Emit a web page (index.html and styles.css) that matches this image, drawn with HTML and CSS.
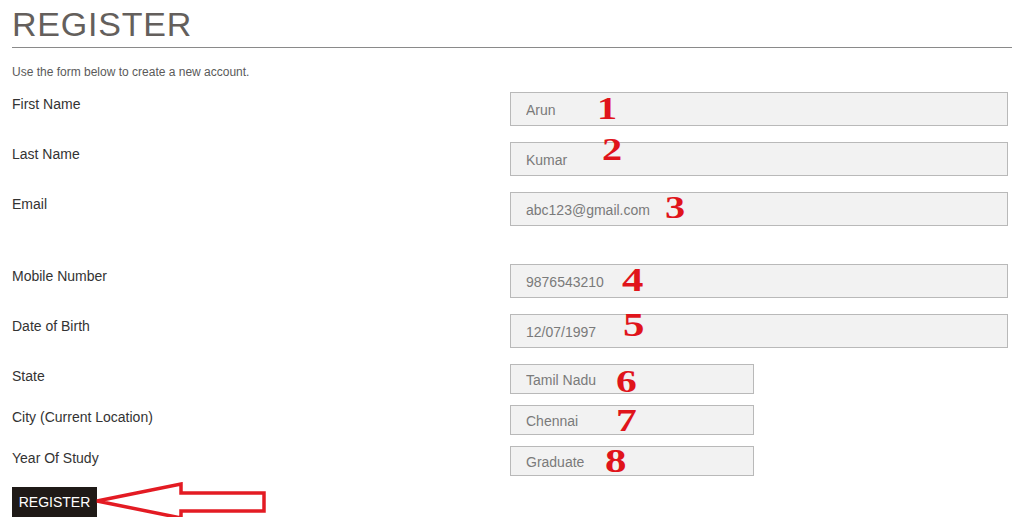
FILE: index.html
```html
<!DOCTYPE html>
<html>
<head>
<meta charset="utf-8">
<title>Register</title>
<link rel="stylesheet" href="styles.css">
</head>
<body>
<div class="page">
  <h1 class="title">REGISTER</h1>
  <p class="intro">Use the form below to create a new account.</p>
  <form class="form">
    <div class="row">
      <label class="label">First Name</label>
      <div class="field"><input class="input" type="text" value="Arun"><span class="num n1">1</span></div>
    </div>
    <div class="row">
      <label class="label">Last Name</label>
      <div class="field"><input class="input" type="text" value="Kumar"><span class="num n2">2</span></div>
    </div>
    <div class="row row-spaced">
      <label class="label">Email</label>
      <div class="field"><input class="input" type="text" value="abc123@gmail.com"><span class="num n3">3</span></div>
    </div>
    <div class="row">
      <label class="label">Mobile Number</label>
      <div class="field"><input class="input" type="text" value="9876543210"><span class="num n4">4</span></div>
    </div>
    <div class="row">
      <label class="label">Date of Birth</label>
      <div class="field"><input class="input" type="text" value="12/07/1997"><span class="num n5">5</span></div>
    </div>
    <div class="row row-small">
      <label class="label">State</label>
      <div class="field"><input class="input input-small" type="text" value="Tamil Nadu"><span class="num n6">6</span></div>
    </div>
    <div class="row row-small">
      <label class="label">City (Current Location)</label>
      <div class="field"><input class="input input-small" type="text" value="Chennai"><span class="num n7">7</span></div>
    </div>
    <div class="row row-small">
      <label class="label">Year Of Study</label>
      <div class="field"><input class="input input-small" type="text" value="Graduate"><span class="num n8">8</span></div>
    </div>
    <div class="actions">
      <button class="btn" type="button">REGISTER</button>
      <svg class="arrow" width="176" height="38" viewBox="0 0 176 38">
        <polygon points="3,19 87,2 87,11 170,11 170,29 87,29 87,36" fill="#ffffff" stroke="#e31b23" stroke-width="3.5" stroke-linejoin="miter"/>
      </svg>
    </div>
  </form>
</div>
</body>
</html>
```

FILE: styles.css
```css
html, body {
  margin: 0;
  padding: 0;
  background: #ffffff;
}

body {
  font-family: "Liberation Sans", Arial, sans-serif;
  color: #333333;
  overflow: hidden;
}

.page {
  padding: 0 1px 0 12px;
}

.title {
  margin: 0;
  padding: 7px 0 6px 0;
  font-size: 34px;
  line-height: 34px;
  font-weight: normal;
  letter-spacing: 0.8px;
  color: #645f5c;
  border-bottom: 1px solid #8a8a8a;
}

.intro {
  margin: 16px 0 0 0;
  font-size: 12px;
  line-height: 16px;
  color: #5a5a5a;
}

.form {
  margin-top: 12px;
  display: flex;
  flex-direction: column;
}

.row {
  display: grid;
  grid-template-columns: 498px 498px;
  height: 34px;
  margin-bottom: 16px;
}

.row-spaced {
  margin-bottom: 38px;
}

.row-small {
  height: 30px;
  margin-bottom: 11px;
}

.label {
  margin-top: 4px;
  font-size: 14px;
  line-height: 16px;
  color: #333333;
}

.field {
  position: relative;
}

.input {
  box-sizing: border-box;
  display: block;
  width: 498px;
  height: 34px;
  margin: 0;
  padding: 2px 15px 0 15px;
  border: 1px solid #b9b9b9;
  background: #f2f2f2;
  font-family: "Liberation Sans", Arial, sans-serif;
  font-size: 14px;
  color: #7a7a7a;
  outline: none;
}

.input-small {
  width: 244px;
  height: 30px;
}

.num {
  position: absolute;
  font-family: "Liberation Serif", "Times New Roman", serif;
  font-weight: bold;
  font-size: 31px;
  line-height: 31px;
  color: #e0141b;
  transform: scaleX(1.3);
  transform-origin: left top;
}

.n1 { left: 87px; top: 1px; }
.n2 { left: 92px; top: -8px; }
.n3 { left: 155px; top: 0px; }
.n4 { left: 112px; top: 0px; font-size: 33px; line-height: 33px; }
.n5 { left: 113px; top: -5px; font-size: 33px; line-height: 33px; }
.n6 { left: 106px; top: 1px; font-size: 32px; line-height: 32px; }
.n7 { left: 106px; top: -1px; font-size: 32px; line-height: 32px; }
.n8 { left: 95px; top: -1px; font-size: 33px; line-height: 33px; }

.actions {
  position: relative;
  height: 30px;
}

.btn {
  display: block;
  height: 30px;
  width: 85px;
  margin: 0;
  padding: 0;
  border: none;
  background: #1f1a17;
  color: #ffffff;
  font-family: "Liberation Sans", Arial, sans-serif;
  font-size: 14px;
}

.arrow {
  position: absolute;
  left: 82px;
  top: -5px;
}
```
